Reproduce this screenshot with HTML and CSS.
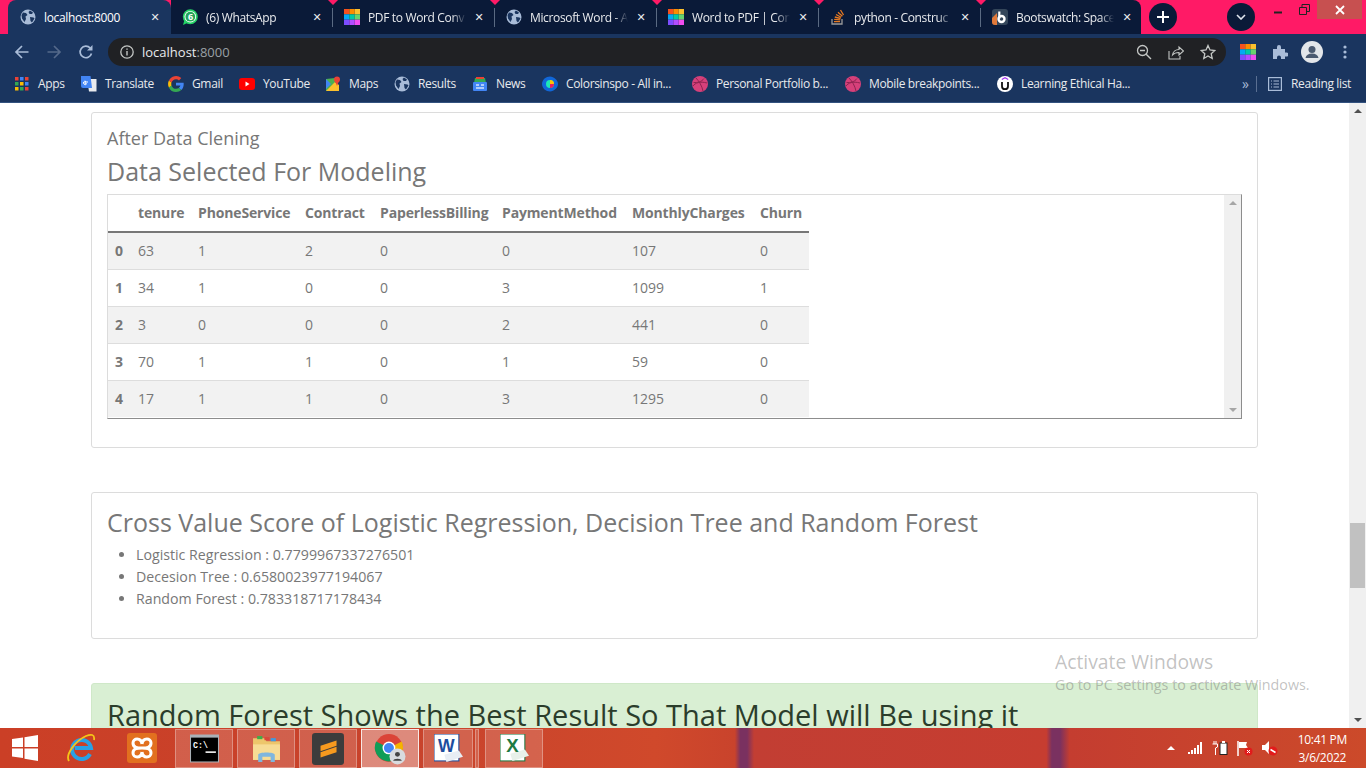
FILE: index.html
```html
<!DOCTYPE html>
<html lang="en">
<head>
    <meta charset="UTF-8">
    <title>localhost:8000</title>
    <link rel="stylesheet" href="styles.css">
</head>
<body>
<svg class="defs" width="0" height="0">
    <symbol id="i-globe" viewBox="0 0 16 16">
        <circle cx="8" cy="8" r="7.5" fill="#a9bcd8"/>
        <path d="M3 3.5l3 .5 1.5 2-2 1.5.5 2.5-1.5 3L2 9.500 1.500 6zM10 1.500l3 2-1 1.500-2.500 0-1-2zM10 8l3.500.5 1 1-2.500 4-1.500-1.500z" fill="#1a355f"/>
    </symbol>
    <symbol id="i-grid" viewBox="0 0 16 16">
        <path fill="#f4511e" d="M0 0h5.300v5.300H0z"/><path fill="#fb8c00" d="M5.300 0h5.400v5.300H5.300z"/><path fill="#fbc02d" d="M10.700 0H16v5.300h-5.300z"/>
        <path fill="#03a9f4" d="M0 5.300h5.300v5.400H0z"/><path fill="#00c9a7" d="M5.300 5.300h5.400v5.400H5.300z"/><path fill="#66d36e" d="M10.700 5.300H16v5.400h-5.300z"/>
        <path fill="#7c4dff" d="M0 10.700h5.300V16H0z"/><path fill="#b14dff" d="M5.300 10.700h5.400V16H5.300z"/><path fill="#f04df0" d="M10.700 10.700H16V16h-5.300z"/>
    </symbol>
    <symbol id="i-dribbble" viewBox="0 0 16 16">
        <circle cx="8" cy="8" r="8" fill="#d6407a"/>
        <path d="M1.500 6.500c4 .3 8-.5 10.500-4M4 2c3 3 6 8 7 13M1 10c2-3 7-5 14-3" fill="none" stroke="#8e2450" stroke-width="1"/>
    </symbol>
</svg>

<div class="browser">
    <div class="tabstrip">
        <div class="tab tab-active">
            <svg class="fav"><use href="#i-globe"/></svg>
            <span class="tab-title">localhost:8000</span><span class="tab-x">✕</span>
        </div>
        <div class="tab">
            <svg class="fav" viewBox="0 0 16 16"><circle cx="8.300" cy="7.700" r="7.500" fill="#25d366"/><path d="M1 16l1.300-4.500 3 2.500z" fill="#25d366"/><circle cx="8.300" cy="7.700" r="5.800" fill="#fff"/><circle cx="8.300" cy="7.700" r="4.900" fill="#25a35a"/><text x="8.300" y="11" class="wa-num">6</text></svg>
            <span class="tab-title">(6) WhatsApp</span><span class="tab-x">✕</span>
        </div>
        <div class="tab">
            <svg class="fav"><use href="#i-grid"/></svg>
            <span class="tab-title">PDF to Word Conv</span><span class="tab-x">✕</span>
        </div>
        <div class="tab">
            <svg class="fav"><use href="#i-globe"/></svg>
            <span class="tab-title">Microsoft Word - A</span><span class="tab-x">✕</span>
        </div>
        <div class="tab">
            <svg class="fav"><use href="#i-grid"/></svg>
            <span class="tab-title">Word to PDF | Con</span><span class="tab-x">✕</span>
        </div>
        <div class="tab">
            <svg class="fav" viewBox="0 0 16 16"><path d="M2 10v5h10v-5" fill="none" stroke="#9a9a9a" stroke-width="1.300"/><path d="M4 12.700h6M4.200 10.300l6 .6M4.800 8l5.800 1.500M6 5.500l5.200 2.800M8 3.300l4.400 4M10.500 1l3 5" fill="none" stroke="#e87a22" stroke-width="1.300"/></svg>
            <span class="tab-title">python - Construc</span><span class="tab-x">✕</span>
        </div>
        <div class="tab tab-last">
            <svg class="fav" viewBox="0 0 16 16"><rect width="16" height="16" rx="3" fill="#34465a"/><path d="M0 9l5-5v12H3a3 3 0 0 1-3-3z" fill="#e0793a"/><circle cx="9.500" cy="10" r="3" fill="none" stroke="#fff" stroke-width="2.400"/><path d="M7.300 2.500v7" stroke="#fff" stroke-width="2.200"/></svg>
            <span class="tab-title">Bootswatch: Space</span><span class="tab-x">✕</span>
        </div>
        <div class="round-btn new-tab"><svg width="12" height="12" viewBox="0 0 12 12"><path d="M6 0v12M0 6h12" stroke="#fff" stroke-width="2"/></svg></div>
        <div class="round-btn tab-search"><svg width="10" height="6" viewBox="0 0 10 6"><path d="M1 1l4 4 4-4" fill="none" stroke="#dfe5ee" stroke-width="1.600"/></svg></div>
        <div class="win-controls">
            <span class="win-btn"><svg width="10" height="10" viewBox="0 0 10 10"><path d="M1 7.500h8" stroke="#222" stroke-width="2"/></svg></span>
            <span class="win-btn"><svg width="11" height="11" viewBox="0 0 11 11"><path d="M.5 3.500h7v7h-7zM3 3.500V.5h7.500v7H7.500" fill="none" stroke="#222"/></svg></span>
            <span class="win-btn win-close"><svg width="10" height="10" viewBox="0 0 10 10"><path d="M1 1l8 8M9 1L1 9" stroke="#fff" stroke-width="1.800"/></svg></span>
        </div>
    </div>

    <div class="toolbar">
        <svg class="nav-icon" viewBox="0 0 16 16"><path d="M14.500 8H2M8 2L2 8l6 6" fill="none" stroke="#a9bcd8" stroke-width="1.700"/></svg>
        <svg class="nav-icon" viewBox="0 0 16 16"><path d="M1.500 8H14M8 2l6 6-6 6" fill="none" stroke="#54698a" stroke-width="1.700"/></svg>
        <svg class="nav-icon" viewBox="0 0 16 16"><path d="M13.500 9.500A5.800 5.800 0 1 1 12.200 4" fill="none" stroke="#a9bcd8" stroke-width="1.700"/><path d="M14.500 1v5.500H9z" fill="#a9bcd8"/></svg>
        <div class="omnibox">
            <svg class="omni-info" viewBox="0 0 14 14"><circle cx="7" cy="7" r="6.200" fill="none" stroke="#c4c7c5" stroke-width="1.300"/><path d="M7 6v4.500M7 3.500v1.300" stroke="#c4c7c5" stroke-width="1.400"/></svg>
            <span class="omni-url">localhost<span class="omni-port">:8000</span></span>
            <span class="omni-actions">
                <svg width="16" height="16" viewBox="0 0 16 16"><circle cx="6.500" cy="6.500" r="5" fill="none" stroke="#c4c7c5" stroke-width="1.300"/><path d="M4 6.500h5M10.200 10.200l4.800 4.800" stroke="#c4c7c5" stroke-width="1.400"/></svg>
                <svg width="16" height="16" viewBox="0 0 16 16"><path d="M1 7v8h11v-3M4.500 11c.5-3.500 3.500-5.500 6.500-5.500V3l4.500 4-4.500 4V8.500c-2.500 0-5 .8-6.500 2.500z" fill="none" stroke="#c4c7c5" stroke-width="1.100"/></svg>
                <svg width="16" height="16" viewBox="0 0 16 16"><path d="M8 1.500l2 4.500 4.800.5-3.600 3.200 1 4.800L8 12l-4.200 2.500 1-4.800L1.200 6.500 6 6z" fill="none" stroke="#c4c7c5" stroke-width="1.300"/></svg>
            </span>
        </div>
        <div class="ext-icons">
            <svg class="ext-grid"><use href="#i-grid"/></svg>
            <svg class="ext-puzzle" width="16" height="16" viewBox="0 0 16 16"><path d="M1 5h4V3a2 2 0 0 1 4 0v2h4v3.500h1.500a2 2 0 0 1 0 4H13V15H9v-1.500a2 2 0 0 0-4 0V15H1z" fill="#a9bcd8"/></svg>
            <svg width="22" height="22" viewBox="0 0 22 22"><circle cx="11" cy="11" r="11" fill="#e3e6ea"/><circle cx="11" cy="8.500" r="3.500" fill="#4b5a70"/><path d="M4.500 17c.5-3 3-4.500 6.500-4.500s6 1.500 6.500 4.500z" fill="#4b5a70"/></svg>
            <svg class="ext-more" width="4" height="14" viewBox="0 0 4 14"><circle cx="2" cy="2" r="1.600" fill="#a9bcd8"/><circle cx="2" cy="7" r="1.600" fill="#a9bcd8"/><circle cx="2" cy="12" r="1.600" fill="#a9bcd8"/></svg>
        </div>
    </div>

    <div class="bookmarks">
        <div class="bm-list">
            <a class="bm"><svg class="fav apps" viewBox="0 0 14 14"><path fill="#ea4335" d="M0 0h3.500v3.500H0z"/><path fill="#4285f4" d="M5 0h3.500v3.500H5z"/><path fill="#ea4335" d="M10 0h3.500v3.500H10z"/><path fill="#34a853" d="M0 5h3.500v3.500H0z"/><path fill="#fbbc05" d="M5 5h3.500v3.500H5z"/><path fill="#4285f4" d="M10 5h3.500v3.500H10z"/><path fill="#fbbc05" d="M0 10h3.500v3.500H0z"/><path fill="#34a853" d="M5 10h3.500v3.500H5z"/><path fill="#ea4335" d="M10 10h3.500v3.500H10z"/></svg>Apps</a>
            <a class="bm"><svg class="fav" viewBox="0 0 16 16"><path d="M6 3h9.500v12.500H8z" fill="#e8eaed"/><path d="M0 0h9.500l1.500 12H2a2 2 0 0 1-2-2z" fill="#4285f4"/><path d="M7 6H4v1.800h1.600a1.700 1.700 0 1 1-.5-2.300" fill="none" stroke="#fff"/></svg>Translate</a>
            <a class="bm"><svg class="fav" viewBox="0 0 16 16"><path d="M15.700 8.200c0-.6 0-1-.1-1.500H8v2.900h4.400c-.2 1-.8 1.800-1.600 2.400l2.500 2c1.500-1.400 2.400-3.400 2.400-5.800z" fill="#4285f4"/><path d="M8 16c2.200 0 4-.7 5.300-2l-2.500-2c-.7.500-1.600.8-2.800.8-2.100 0-3.900-1.400-4.500-3.400L.9 11.400A8 8 0 0 0 8 16z" fill="#34a853"/><path d="M3.500 9.500a5 5 0 0 1 0-3L.9 4.500a8 8 0 0 0 0 7z" fill="#fbbc05"/><path d="M8 3.200c1.200 0 2.200.4 3 1.200l2.300-2.300A8 8 0 0 0 .9 4.500l2.600 2C4.100 4.600 5.900 3.200 8 3.200z" fill="#ea4335"/></svg>Gmail</a>
            <a class="bm"><svg class="fav" viewBox="0 0 16 16"><rect y="2" width="16" height="12" rx="3" fill="#f00"/><path d="M6.500 5.500L10.500 8l-4 2.500z" fill="#fff"/></svg>YouTube</a>
            <a class="bm"><svg class="fav" viewBox="0 0 16 16"><path d="M1 3l9-1v13H1z" fill="#4caf50"/><path d="M1 15L10 6l4 3v6z" fill="#fbc02d"/><path d="M1 3l5 5-5 5z" fill="#4285f4"/><circle cx="12" cy="3.500" r="3" fill="#ea4335"/><path d="M10 5l2 5 2-5z" fill="#ea4335"/></svg>Maps</a>
            <a class="bm"><svg class="fav"><use href="#i-globe"/></svg>Results</a>
            <a class="bm"><svg class="fav" viewBox="0 0 16 16"><path d="M3 2h10l1 5H2z" fill="#34a853"/><path d="M4 1h8v2H4z" fill="#ea4335"/><rect x="1" y="6" width="14" height="9" rx="1" fill="#4285f4"/><path d="M4 9h3M9 9h3M4 12h8" stroke="#d2e3fc" stroke-width="1.300"/></svg>News</a>
            <a class="bm"><svg class="fav" viewBox="0 0 16 16"><path d="M8 0.500c4 0 8 4 8 7.500s-4 7.500-8 7.500S0 12.500 0 8 4 .5 8 .5z" fill="#1167d8"/><circle cx="8" cy="8" r="4" fill="#1de9b6"/><path d="M8 4a4 4 0 0 1 4 4H8z" fill="#ffc107"/><path d="M8 8h4a4 4 0 0 1-4 4z" fill="#e91e63"/></svg>Colorsinspo - All in...</a>
            <a class="bm"><svg class="fav"><use href="#i-dribbble"/></svg>Personal Portfolio b...</a>
            <a class="bm"><svg class="fav"><use href="#i-dribbble"/></svg>Mobile breakpoints...</a>
            <a class="bm"><svg class="fav" viewBox="0 0 16 16"><circle cx="8" cy="8" r="8" fill="#fff"/><path d="M4.800 3.500L8 1.800l3.200 1.700" fill="none" stroke="#a435f0" stroke-width="1.300"/><path d="M5 6v4.200a3 3 0 0 0 6 0V6" fill="none" stroke="#111" stroke-width="1.800"/></svg>Learning Ethical Ha...</a>
        </div>
        <div class="bm-end">
            <span class="bm-more">»</span>
            <span class="bm-sep"></span>
            <a class="bm reading"><svg class="fav" viewBox="0 0 14 14"><rect x=".6" y=".6" width="12.800" height="12.800" fill="none" stroke="#a9bcd8" stroke-width="1.200"/><path d="M3 4h1M3 7h1M3 10h1M5.500 4H11M5.500 7H11M5.500 10H11" stroke="#a9bcd8" stroke-width="1.200"/></svg>Reading list</a>
        </div>
    </div>

    <div class="viewport">
        <div class="page">
            <section class="card card-data">
                <h5 class="sub">After Data Clening</h5>
                <h4 class="title">Data Selected For Modeling</h4>
                <div class="table-box">
                    <div class="table-wrap">
                        <table class="data-table">
                            <thead>
                                <tr><th></th><th>tenure</th><th>PhoneService</th><th>Contract</th><th>PaperlessBilling</th><th>PaymentMethod</th><th>MonthlyCharges</th><th>Churn</th></tr>
                            </thead>
                            <tbody>
                                <tr><th>0</th><td>63</td><td>1</td><td>2</td><td>0</td><td>0</td><td>107</td><td>0</td></tr>
                                <tr><th>1</th><td>34</td><td>1</td><td>0</td><td>0</td><td>3</td><td>1099</td><td>1</td></tr>
                                <tr><th>2</th><td>3</td><td>0</td><td>0</td><td>0</td><td>2</td><td>441</td><td>0</td></tr>
                                <tr><th>3</th><td>70</td><td>1</td><td>1</td><td>0</td><td>1</td><td>59</td><td>0</td></tr>
                                <tr><th>4</th><td>17</td><td>1</td><td>1</td><td>0</td><td>3</td><td>1295</td><td>0</td></tr>
                            </tbody>
                        </table>
                    </div>
                    <div class="scrollbar scrollbar-inner">
                        <span class="arrow-up"></span>
                        <span class="arrow-down"></span>
                    </div>
                </div>
            </section>

            <section class="card card-scores">
                <h4 class="title">Cross Value Score of Logistic Regression, Decision Tree and Random Forest</h4>
                <ul class="scores">
                    <li>Logistic Regression : 0.7799967337276501</li>
                    <li>Decesion Tree : 0.6580023977194067</li>
                    <li>Random Forest : 0.783318717178434</li>
                </ul>
            </section>

            <section class="alert-success">
                <h3 class="alert-title">Random Forest Shows the Best Result So That Model will Be using it</h3>
            </section>
        </div>

        <div class="scrollbar scrollbar-page">
            <span class="arrow-up"></span>
            <span class="thumb"></span>
            <span class="arrow-down"></span>
        </div>

        <div class="activate">
            <div class="activate-big">Activate Windows</div>
            <div class="activate-small">Go to PC settings to activate Windows.</div>
        </div>
    </div>

    <div class="taskbar">
        <svg class="start" viewBox="0 0 26 26"><path d="M0 4l11-1.500V12H0zM12.500 2.300L26 0v12H12.500zM0 13.500h11V23L0 21.500zM12.500 13.500H26V26l-13.500-2.200z" fill="#fff"/></svg>
        <svg class="pin pin-ie" viewBox="0 0 30 30"><path d="M24 21a9.500 9.500 0 1 1 1-6H9" fill="none" stroke="#2aa0e4" stroke-width="4"/><path d="M3 28C-1 22 9 8 20 3c5-2 9-2 8 4" fill="none" stroke="#f5c518" stroke-width="1.800"/></svg>
        <svg class="pin pin-xampp" viewBox="0 0 30 30"><rect width="30" height="30" rx="3" fill="#e2701f"/><path d="M15 11c-1-7-9-6-9-1s5 5 9 5c4 0 9 0 9 5s-8 6-9-1M15 11c1-7 9-6 9-1s-5 5-9 5c-4 0-9 0-9 5s8 6 9-1" fill="none" stroke="#fff" stroke-width="3"/></svg>
        <div class="task-btns">
            <div class="task"><svg class="task-ico" viewBox="0 0 28 27"><rect width="28" height="27" fill="#a9b0b6"/><rect x="1" y="3" width="26" height="23" fill="#000"/><text x="3" y="13" class="cmd">C:\</text><path d="M15 17h10" stroke="#fff" stroke-width="1.500"/></svg></div>
            <div class="task"><svg class="task-ico" viewBox="0 0 28 28"><path d="M1 4h11l2 3h13v18H1z" fill="#edc66b"/><path d="M5 2h5v3H5z" fill="#3fae4a"/><path d="M12 3h5v3h-5z" fill="#d9483b"/><path d="M18 4h5v3h-5z" fill="#3f9ae0"/><path d="M1 10h26v15H1z" fill="#f7dc95"/><path d="M6 27v-7c0-3 16-3 16 0v7h-4v-5h-8v5z" fill="#7fb6de"/></svg></div>
            <div class="task"><svg class="task-ico task-ico-big" viewBox="0 0 30 30"><rect width="30" height="30" rx="3" fill="#3c3c3c"/><path d="M8 12l15-5v5L8 17zM8 18l15-5v5L8 23z" fill="#f79a1e"/></svg></div>
            <div class="task task-active"><svg class="task-ico task-ico-big" viewBox="0 0 30 30"><circle cx="14" cy="14" r="13" fill="#db4437"/><path d="M14 14L26 8a13 13 0 0 1-6 17z" fill="#f4b400"/><path d="M14 14l6 11A13 13 0 0 1 2 8z" fill="#0f9d58"/><circle cx="14" cy="14" r="6" fill="#fff"/><circle cx="14" cy="14" r="4.700" fill="#4285f4"/><circle cx="22" cy="22" r="7.500" fill="#d8dbdf"/><circle cx="22" cy="20" r="2.300" fill="#444"/><path d="M18 26c0-2.500 8-2.500 8 0z" fill="#444"/></svg></div>
            <div class="task task-word"><svg class="task-ico" viewBox="0 0 28 28"><rect width="24" height="26" fill="#fff" stroke="#1c4d9e"/><path d="M10 20l14-4 4 6-16 5z" fill="#e8edf4"/><text x="12" y="17" class="word-w">W</text></svg></div>
            <div class="task task-stack"></div>
            <div class="task"><svg class="task-ico" viewBox="0 0 28 28"><rect width="24" height="26" fill="#fff" stroke="#1d7a43"/><path d="M10 19l14-4 4 6-16 5z" fill="#e8f1ea"/><text x="12" y="17" class="excel-x">X</text></svg></div>
        </div>
        <div class="tray">
            <span class="tray-caret"></span>
            <svg width="16" height="12" viewBox="0 0 16 12"><path d="M1 10h2v2H1zM4 8h2v4H4zM7 6h2v6H7zM10 3h2v9h-2zM13 0h2v12h-2z" fill="#fff"/></svg>
            <svg width="16" height="14" viewBox="0 0 16 14"><path d="M2 0v3M4 0v3M.5 3h5v3l-2 1v7" fill="none" stroke="#fff"/><rect x="8" y="2" width="7" height="11.500" fill="#fff" stroke="#222"/><path d="M10 0h3v2h-3z" fill="#fff"/></svg>
            <svg width="16" height="15" viewBox="0 0 16 15"><path d="M1 0v15" stroke="#fff" stroke-width="1.500"/><path d="M2 1h8l-1 3 2 3H2z" fill="#fff"/><circle cx="11.500" cy="10.500" r="4" fill="#e21b1b"/><path d="M10 9l3 3M13 9l-3 3" stroke="#fff"/></svg>
            <svg width="16" height="15" viewBox="0 0 16 15"><path d="M0 4h3l4-4v13L3 9H0z" fill="#fff"/><circle cx="11" cy="10" r="4.500" fill="#e21b1b"/><path d="M8.500 8.500l5 3" stroke="#fff" stroke-width="1.500"/></svg>
            <div class="clock">
                <div>10:41 PM</div>
                <div>3/6/2022</div>
            </div>
        </div>
    </div>
</div>
</body>
</html>
```

FILE: styles.css
```css
* {
    box-sizing: border-box;
}
html, body {
    margin: 0;
    height: 100%;
    overflow: hidden;
}
body {
    font-family: "Open Sans", sans-serif;
    color: #777;
    background: #fff;
}
.defs {
    position: absolute;
}
.browser {
    display: flex;
    flex-direction: column;
    height: 768px;
}
.fav {
    width: 16px;
    height: 16px;
    flex: none;
}

/* tab strip */
.tabstrip {
    display: flex;
    align-items: flex-start;
    height: 34px;
    padding-left: 8px;
    background: #ff1a66;
    flex: none;
}
.tab {
    position: relative;
    display: flex;
    align-items: center;
    width: 162px;
    height: 34px;
    padding: 0 9px 0 11px;
    background: #0a1a38;
    color: #e8eaed;
    font-size: 12px;
    letter-spacing: -0.35px;
    flex: none;
}
.tab::after {
    content: "";
    position: absolute;
    right: 0;
    top: 8px;
    height: 19px;
    border-right: 1px solid #5a6a82;
}
.tab::before {
    content: "";
    position: absolute;
    right: -5px;
    top: 0;
    z-index: 1;
    border: 5px solid transparent;
    border-top-color: #ff1a66;
    border-bottom: 0;
}
.tab-active {
    background: #1a355f;
    border-radius: 8px 8px 0 0;
    width: 163px;
    padding-left: 12px;
    color: #fff;
}
.tab-active::after, .tab-active::before {
    display: none;
}
.tab-last {
    width: 160px;
    border-radius: 0 8px 0 0;
    padding-right: 7px;
}
.tab-last::after, .tab-last::before {
    display: none;
}
.tab-title {
    flex: 1;
    min-width: 0;
    margin-left: 8px;
    white-space: nowrap;
    overflow: hidden;
    -webkit-mask-image: linear-gradient(to left, transparent 0, #000 14px);
    mask-image: linear-gradient(to left, transparent 0, #000 14px);
}
.tab-x {
    width: 14px;
    margin-left: 6px;
    text-align: center;
    font-size: 11px;
    font-weight: 700;
    font-family: "DejaVu Sans", sans-serif;
    color: #e8eaed;
}
.tab-active .tab-title {
    -webkit-mask-image: none;
    mask-image: none;
}
.wa-num {
    font: 700 9px "Open Sans", sans-serif;
    fill: #fff;
    text-anchor: middle;
}
.round-btn {
    display: flex;
    align-items: center;
    justify-content: center;
    width: 28px;
    height: 28px;
    margin-top: 3px;
    border-radius: 50%;
    background: #0a1a38;
}
.new-tab {
    margin-left: 8px;
}
.tab-search {
    margin-left: 50px;
}
.win-controls {
    display: flex;
    margin-left: auto;
    margin-right: 4px;
}
.win-btn {
    display: flex;
    align-items: center;
    justify-content: center;
    width: 26px;
    height: 19px;
}
.win-close {
    width: 45px;
    background: #c75050;
}

/* toolbar */
.toolbar {
    display: flex;
    align-items: center;
    height: 33px;
    padding: 3px 0 0 14px;
    background: #1a355f;
    flex: none;
}
.nav-icon {
    width: 16px;
    height: 16px;
    margin-right: 16px;
    flex: none;
}
.omnibox {
    display: flex;
    align-items: center;
    width: 1118px;
    height: 28px;
    margin-left: -2px;
    padding: 0 10px 0 12px;
    border-radius: 14px;
    background: #202124;
    flex: none;
}
.omni-info {
    width: 14px;
    height: 14px;
}
.omni-url {
    margin-left: 8px;
    font-size: 13px;
    color: #e8eaed;
}
.omni-port {
    color: #9aa0a6;
}
.omni-actions {
    display: flex;
    gap: 16px;
    margin-left: auto;
}
.ext-icons {
    display: flex;
    align-items: center;
    gap: 14px;
    margin-left: 14px;
}
.ext-grid {
    width: 16px;
    height: 16px;
}
.ext-puzzle {
    margin: 0 -1px 0 2px;
}
.ext-more {
    margin-left: 6px;
}

/* bookmarks */
.bookmarks {
    display: flex;
    align-items: center;
    justify-content: space-between;
    height: 36px;
    padding: 0 0 2px 15px;
    background: #1a355f;
    border-bottom: 1px solid #33527f;
    color: #e8eaed;
    font-size: 12px;
    letter-spacing: -0.35px;
    flex: none;
}
.bm-list {
    display: grid;
    grid-template-columns: 66px 87px 71px 86px 69px 78px 70px 150px 153px 152px 150px;
}
.bm {
    display: flex;
    align-items: center;
    gap: 8px;
    white-space: nowrap;
}
.apps {
    width: 14px;
    height: 14px;
    margin-right: 1px;
}
.bm-end {
    display: flex;
    align-items: center;
    padding-right: 15px;
}
.bm-more {
    width: 14px;
    color: #a9bcd8;
    font-size: 14px;
}
.bm-sep {
    height: 16px;
    margin-right: 11px;
    border-left: 1px solid #5a6f92;
}
.reading {
    gap: 9px;
}
.reading .fav {
    width: 14px;
    height: 14px;
}

/* page */
.viewport {
    position: relative;
    display: flex;
    flex: 1;
    min-height: 0;
    overflow: hidden;
}
.page {
    flex: 1;
    min-width: 0;
    padding: 9px 91px 0 91px;
}
.card {
    padding: 15px;
    border: 1px solid #dcdcdc;
    border-radius: 3px;
    background: #fff;
}
.sub {
    margin: -1px 0 0;
    font-size: 18px;
    font-weight: 400;
    line-height: 22px;
}
.title {
    margin: 5px 0 0;
    font-size: 25px;
    font-weight: 400;
    line-height: 34px;
}
.card-data {
    height: 336px;
}
.table-box {
    display: flex;
    height: 225px;
    margin-top: 6px;
    border: 1px solid #dcdcdc;
    border-right-color: #8d8d8d;
    border-bottom-color: #8d8d8d;
}
.table-wrap {
    flex: 1;
    min-width: 0;
    overflow: hidden;
}
.data-table {
    table-layout: fixed;
    width: 701px;
    border-collapse: collapse;
    font-size: 14px;
    line-height: 19px;
}
.data-table th:nth-child(1) { width: 23px; }
.data-table th:nth-child(2) { width: 60px; }
.data-table th:nth-child(3) { width: 107px; }
.data-table th:nth-child(4) { width: 75px; }
.data-table th:nth-child(5) { width: 122px; }
.data-table th:nth-child(6) { width: 130px; }
.data-table th:nth-child(7) { width: 128px; }
.data-table th:nth-child(8) { width: 56px; }
.data-table th, .data-table td {
    padding: 8px 7px 9px;
    text-align: left;
    font-weight: 400;
    white-space: nowrap;
}
.data-table th {
    font-weight: 700;
}
.data-table thead th {
    padding: 8px 7px 9px;
    border-bottom: 2px solid #777;
    letter-spacing: -0.15px;
}
.data-table tbody tr {
    border-top: 1px solid #ddd;
}
.data-table tbody tr:first-child {
    border-top: 0;
}
.data-table tbody tr:nth-child(odd) {
    background: #f2f2f2;
}
.scrollbar {
    display: flex;
    flex-direction: column;
    align-items: center;
    justify-content: space-between;
    width: 17px;
    background: #f0f0f0;
    flex: none;
}
.scrollbar-inner {
    padding: 6px 0;
}
.scrollbar-page {
    position: relative;
    padding: 6px 0;
}
.arrow-up, .arrow-down {
    width: 0;
    height: 0;
    border: 4px solid transparent;
    border-top: 0;
    border-bottom: 4px solid #a6a6a6;
}
.arrow-down {
    border: 4px solid transparent;
    border-bottom: 0;
    border-top: 4px solid #a6a6a6;
}
.scrollbar-page .arrow-up {
    border-bottom-color: #505050;
}
.scrollbar-page .arrow-down {
    border-top-color: #505050;
}
.thumb {
    position: absolute;
    top: 420px;
    left: 1px;
    width: 15px;
    height: 65px;
    background: #c1c1c1;
}
.card-scores {
    height: 147px;
    margin-top: 44px;
}
.card-scores .title {
    margin-top: -3px;
}
.scores {
    margin: 5px 0 0;
    padding-left: 29px;
    font-size: 14.2px;
    line-height: 22px;
}
.alert-success {
    height: 60px;
    margin-top: 44px;
    padding: 12px 15px;
    border: 1px solid #cfe8c8;
    border-radius: 3px;
    background: #d9efd3;
}
.alert-title {
    margin: 0;
    font-size: 29px;
    font-weight: 400;
    line-height: 38px;
    color: #2b3d2b;
}
.activate {
    position: absolute;
    left: 1055px;
    top: 546px;
    color: rgba(100, 100, 100, 0.4);
}
.activate-big {
    font-size: 19.3px;
    line-height: 26px;
}
.activate-small {
    font-size: 14.3px;
    line-height: 20px;
}

/* taskbar */
.taskbar {
    display: flex;
    align-items: center;
    height: 40px;
    background: linear-gradient(90deg, #cb3f26 0, #c8432c 30%, #d0492b 48%, #c9432c 53.8%, #7a3160 54.2%, #7a3160 54.7%, #c23e33 55.2%, #c63d30 76.6%, #7a3160 77%, #7a3160 77.6%, #c43d30 78.3%, #cc4a2a 100%);
    flex: none;
}
.start {
    width: 26px;
    height: 26px;
    margin-left: 12px;
}
.pin {
    width: 30px;
    height: 30px;
}
.pin-ie {
    margin-left: 28px;
}
.pin-xampp {
    margin-left: 31px;
}
.task-btns {
    display: flex;
    margin-left: 18px;
    height: 39px;
    align-self: flex-end;
}
.task {
    display: flex;
    align-items: center;
    justify-content: center;
    width: 58px;
    margin-right: 4px;
    border: 1px solid rgba(255, 255, 255, 0.3);
    background: rgba(255, 255, 255, 0.16);
}
.task-active {
    border-color: rgba(255, 255, 255, 0.8);
    background: rgba(255, 255, 255, 0.38);
}
.task-word {
    width: 50px;
    margin-right: 2px;
}
.task-stack {
    width: 4px;
    margin-right: 6px;
}
.task-ico {
    width: 29px;
    height: 29px;
}
.task-ico-big {
    width: 32px;
    height: 32px;
}
.cmd {
    font: 700 8px "Liberation Mono", monospace;
    fill: #fff;
}
.word-w {
    font: 700 17px "Liberation Sans", sans-serif;
    fill: #1c4d9e;
    text-anchor: middle;
}
.excel-x {
    font: 700 18px "Liberation Sans", sans-serif;
    fill: #1d7a43;
    text-anchor: middle;
}
.tray {
    display: flex;
    align-items: center;
    gap: 9px;
    margin-left: auto;
    margin-right: 19px;
}
.tray-caret {
    width: 0;
    height: 0;
    margin-right: 3px;
    border: 4px solid transparent;
    border-top: 0;
    border-bottom: 4px solid #fff;
}
.clock {
    margin: 2px 0 0 11px;
    text-align: center;
    color: #fff;
    font-size: 12px;
    letter-spacing: -0.3px;
    line-height: 18px;
}
```
